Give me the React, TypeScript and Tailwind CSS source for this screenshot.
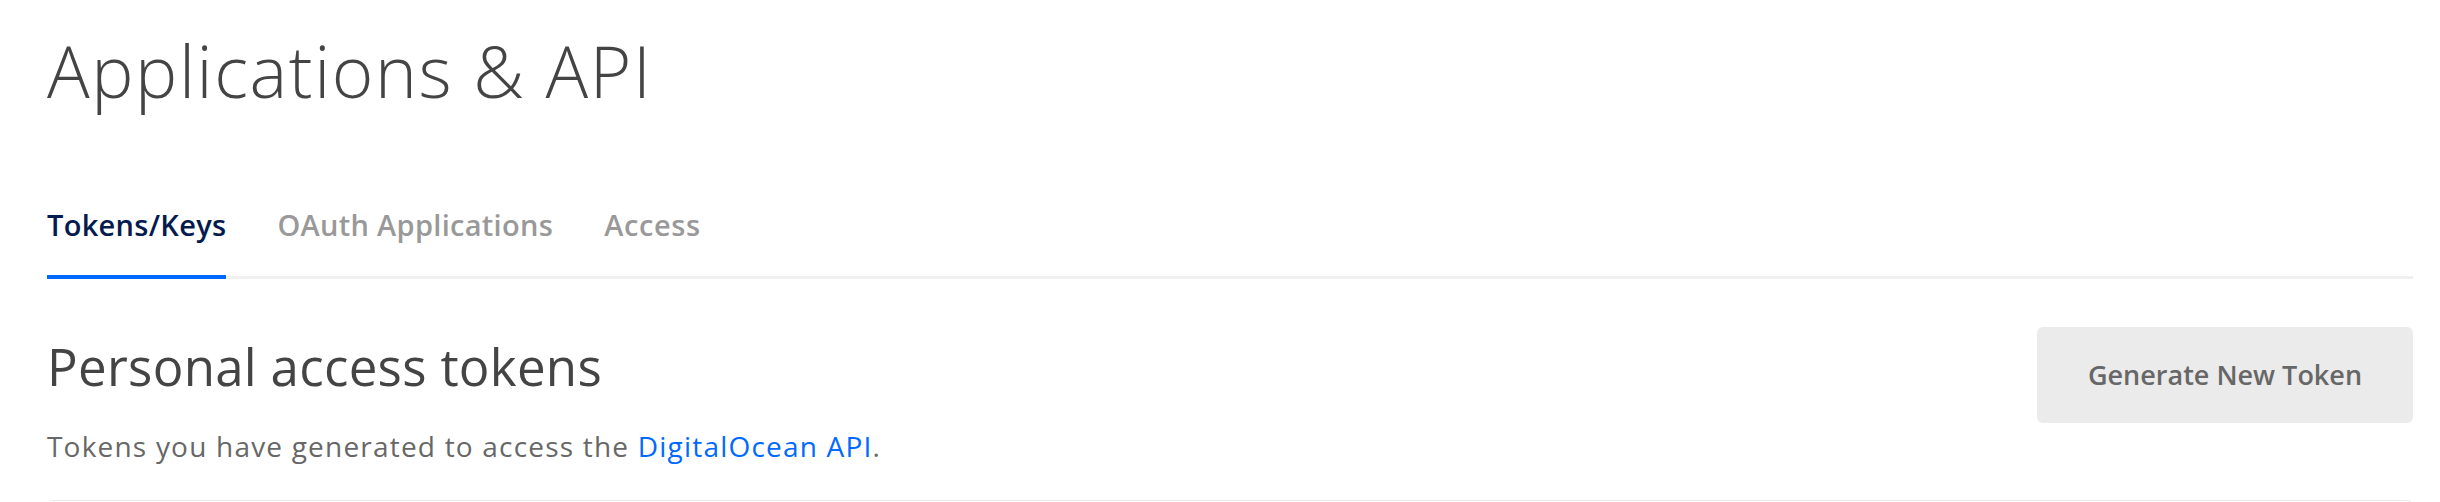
export default function App() {
  return (
    <div className="h-screen overflow-hidden bg-white pl-[47px] pr-[27px] font-['Open_Sans','Lato',sans-serif] text-[#444]">
      <h1 className="pt-[28px] text-[71px] font-light leading-[86px] tracking-[1.6px] text-[#444]">
        Applications &amp; API
      </h1>

      <nav className="mt-[93px] flex gap-[51px] border-b-[3px] border-[#f0f0f0]">
        <a className="-mb-[3px] border-b-4 border-[#0069ff] pb-[32px] text-[29px] font-semibold leading-[36px] tracking-[0.3px] text-[#031b4e]">
          Tokens/Keys
        </a>
        <a className="pb-[32px] text-[29px] font-semibold leading-[36px] tracking-[0.3px] text-[#999]">
          OAuth Applications
        </a>
        <a className="pb-[32px] text-[29px] font-semibold leading-[36px] tracking-[0.6px] text-[#999]">
          Access
        </a>
      </nav>

      <div className="mt-[48px] flex items-start justify-between">
        <div className="pt-[9px]">
          <h2 className="text-[51px] font-normal leading-[60px] tracking-[0.3px] text-[#444]">
            Personal access tokens
          </h2>
          <p className="mt-[33px] text-[28px] leading-[34px] tracking-[1.2px] text-[#676767]">
            Tokens you have generated to access the{' '}
            <a className="text-[#0069ff]">DigitalOcean API</a>.
          </p>
        </div>
        <button
          type="button"
          className="h-[96px] w-[376px] rounded-[6px] bg-[#ebebeb] text-[27px] font-semibold text-[#676767]"
        >
          Generate New Token
        </button>
      </div>

      <div className="mt-[37px] h-[40px] rounded-t-[6px] border border-[#eaeaea]" />
    </div>
  )
}
